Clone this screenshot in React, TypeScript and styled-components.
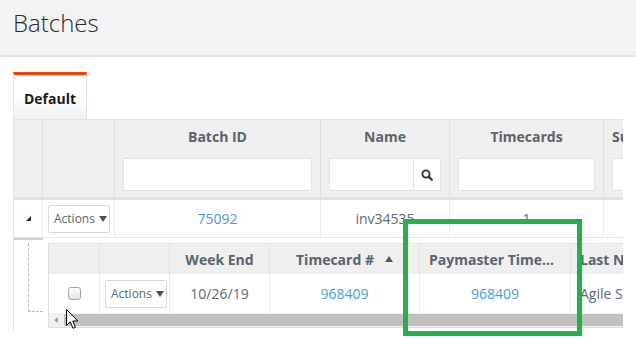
import React from "react";
import styled, { createGlobalStyle } from "styled-components";

const GlobalStyle = createGlobalStyle`
  html, body { margin: 0; padding: 0; background: #fff; }
  body { font-family: "Open Sans", "Noto Sans", sans-serif; }
  * { box-sizing: border-box; }
`;

const Page = styled.div`
  position: relative;
  width: 636px;
  height: 338px;
  overflow: hidden;
  background: #fff;
`;

const TopBar = styled.header`
  height: 57px;
  background: #f2f3f5;
  border-bottom: 2px solid #dfe3e4;
  padding: 8px 13px 0;
`;

const Title = styled.h1`
  margin: 0;
  font-size: 24px;
  font-weight: 300;
  line-height: 30px;
  color: #2b2b2b;
`;

const Content = styled.main`
  padding: 15px 0 0 13px;
`;

const Tabs = styled.div`
  display: flex;
`;

const Tab = styled.div`
  width: 74px;
  height: 47px;
  border-top: 3px solid #ff3d00;
  border-left: 1px solid #e2e2e2;
  border-right: 1px solid #e2e2e2;
  background: linear-gradient(#ffffff, #ffffff 45%, #f1f1f1);
  font-size: 14px;
  font-weight: 700;
  color: #1b1b1b;
  text-align: center;
  padding-top: 14px;
  line-height: 19px;
`;

const Grid = styled.div`
  width: 610px;
  overflow: hidden;
  border-left: 1px solid #e3e3e3;
  padding-bottom: 2px;
`;

const mainCols = "29px 72px 206px 129px 154px 200px";
const subCols = "51px 70px 100px 150px 151px 200px";

const HeaderRow = styled.div`
  display: grid;
  grid-template-columns: ${mainCols};
  height: 81px;
  background: #efefef;
  border-top: 1px solid #e3e3e3;
  border-bottom: 3px solid #e2e2e2;
`;

const HeaderCell = styled.div`
  display: flex;
  flex-direction: column;
  padding: 7px 8px 0;
  border-right: 1px solid #e0e0e0;
  overflow: hidden;
`;

const Label = styled.div<{ $align?: string }>`
  height: 19px;
  margin-bottom: 12px;
  font-size: 14px;
  line-height: 19px;
  font-weight: 700;
  color: #59646c;
  white-space: nowrap;
  overflow: hidden;
  text-align: ${(p) => p.$align || "center"};
`;

const FilterBox = styled.div`
  display: flex;
  height: 33px;
  background: #fff;
  border: 1px solid #e2e2e2;
`;

const FilterField = styled.div`
  flex: 1;
`;

const SearchAddon = styled.div`
  width: 27px;
  border-left: 1px solid #e2e2e2;
  display: flex;
  align-items: center;
  justify-content: center;
`;

const DataRow = styled.div`
  display: grid;
  grid-template-columns: ${mainCols};
  height: 38px;
  border-bottom: 1px solid #e6e6e6;
`;

const Cell = styled.div<{ $justify?: string }>`
  display: flex;
  align-items: center;
  justify-content: ${(p) => p.$justify || "center"};
  border-right: 1px solid #ebebeb;
  font-size: 14px;
  color: #606a72;
  white-space: nowrap;
  overflow: hidden;
`;

const ActionCell = styled(Cell)`
  justify-content: flex-start;
  padding-left: 5px;
`;

const Link = styled.span`
  color: #3c9fe6;
  font-size: 14px;
`;

const ActionsButton = styled.div`
  width: 62px;
  height: 28px;
  display: flex;
  align-items: center;
  padding-left: 5px;
  gap: 4px;
  background: #fff;
  border: 1px solid #d6dadd;
  border-radius: 2px;
  font-size: 12px;
  color: #5a6876;
`;

const Caret = styled.span`
  width: 0;
  height: 0;
  border-left: 4px solid transparent;
  border-right: 4px solid transparent;
  border-top: 6px solid #4a5560;
`;

const DetailRow = styled.div`
  display: flex;
`;

const TreeCell = styled.div`
  width: 29px;
  flex: none;
  border-top: 2px solid #c8d3d9;
`;

const TreeLine = styled.div`
  margin: 3px 0 0 14px;
  width: 15px;
  height: 69px;
  border-left: 1px dashed #bdbdbd;
  border-bottom: 1px dashed #bdbdbd;
`;

const DetailBody = styled.div`
  flex: 1;
  min-width: 0;
  overflow: hidden;
  padding: 5px 0 0 5px;
`;

const SubTable = styled.div`
  border-left: 1px solid #dedede;
  border-top: 1px solid #e3e3e3;
  border-bottom: 1px solid #dcdcdc;
`;

const SubHeaderRow = styled.div`
  display: grid;
  grid-template-columns: ${subCols};
  height: 30px;
  background: #efefef;
`;

const SubHeaderCell = styled.div<{ $justify?: string }>`
  display: flex;
  align-items: center;
  justify-content: ${(p) => p.$justify || "center"};
  gap: 11px;
  padding: 0 9px;
  border-right: 1px solid #e2e2e2;
  font-size: 14px;
  font-weight: 700;
  color: #59646c;
  white-space: nowrap;
  overflow: hidden;
`;

const SortUp = styled.span`
  width: 0;
  height: 0;
  border-left: 4px solid transparent;
  border-right: 4px solid transparent;
  border-bottom: 6px solid #4f5a62;
`;

const SubDataRow = styled.div`
  display: grid;
  grid-template-columns: ${subCols};
  height: 39px;
`;

const SubCell = styled(Cell)`
  padding: 0 9px;
`;

const SubActionCell = styled(ActionCell)``;

const Checkbox = styled.span`
  width: 13px;
  height: 13px;
  border: 1px solid #a7a7a7;
  border-radius: 3px;
  background: linear-gradient(#fdfdfd, #e2e2e2);
`;

const ScrollBar = styled.div`
  display: flex;
  height: 14px;
  background: #f1f1f1;
`;

const ScrollArrow = styled.div`
  width: 14px;
  flex: none;
  display: flex;
  align-items: center;
  justify-content: center;
`;

const ArrowLeft = styled.span`
  width: 0;
  height: 0;
  border-top: 3px solid transparent;
  border-bottom: 3px solid transparent;
  border-right: 4px solid #a3a3a3;
`;

const ScrollThumb = styled.div`
  flex: 1;
  margin: 1px 0 1px 1px;
  background: #c1c1c1;
`;

const Highlight = styled.div`
  position: absolute;
  left: 403px;
  top: 219px;
  width: 179px;
  height: 117px;
  border: 5px solid #22b14c;
  pointer-events: none;
`;

const Cursor = styled.svg`
  position: absolute;
  left: 66px;
  top: 309px;
`;

const SearchIcon = () => (
  <svg width="12" height="12" viewBox="0 0 12 12">
    <circle cx="5" cy="5" r="3.6" fill="none" stroke="#333" strokeWidth="1.8" />
    <line x1="7.6" y1="7.6" x2="10.8" y2="10.8" stroke="#333" strokeWidth="2.2" strokeLinecap="round" />
  </svg>
);

const ExpandedIcon = () => (
  <svg width="5" height="5" viewBox="0 0 5 5">
    <polygon points="5,0 5,5 0,5" fill="#1e2b4b" />
  </svg>
);

const Actions = () => (
  <ActionsButton>
    Actions <Caret />
  </ActionsButton>
);

export default function App() {
  return (
    <Page>
      <GlobalStyle />
      <TopBar>
        <Title>Batches</Title>
      </TopBar>
      <Content>
        <Tabs>
          <Tab>Default</Tab>
        </Tabs>
        <Grid>
          <HeaderRow>
            <HeaderCell />
            <HeaderCell />
            <HeaderCell>
              <Label>Batch ID</Label>
              <FilterBox />
            </HeaderCell>
            <HeaderCell>
              <Label>Name</Label>
              <FilterBox>
                <FilterField />
                <SearchAddon>
                  <SearchIcon />
                </SearchAddon>
              </FilterBox>
            </HeaderCell>
            <HeaderCell>
              <Label>Timecards</Label>
              <FilterBox />
            </HeaderCell>
            <HeaderCell>
              <Label $align="left">Submitted</Label>
              <FilterBox />
            </HeaderCell>
          </HeaderRow>
          <DataRow>
            <Cell>
              <ExpandedIcon />
            </Cell>
            <ActionCell>
              <Actions />
            </ActionCell>
            <Cell>
              <Link>75092</Link>
            </Cell>
            <Cell>inv34535</Cell>
            <Cell>1</Cell>
            <Cell />
          </DataRow>
          <DetailRow>
            <TreeCell>
              <TreeLine />
            </TreeCell>
            <DetailBody>
              <SubTable>
                <SubHeaderRow>
                  <SubHeaderCell />
                  <SubHeaderCell />
                  <SubHeaderCell>Week End</SubHeaderCell>
                  <SubHeaderCell>
                    Timecard # <SortUp />
                  </SubHeaderCell>
                  <SubHeaderCell $justify="flex-start">Paymaster Time…</SubHeaderCell>
                  <SubHeaderCell $justify="flex-start">Last Name</SubHeaderCell>
                </SubHeaderRow>
                <SubDataRow>
                  <Cell>
                    <Checkbox />
                  </Cell>
                  <SubActionCell>
                    <Actions />
                  </SubActionCell>
                  <Cell>10/26/19</Cell>
                  <Cell>
                    <Link>968409</Link>
                  </Cell>
                  <Cell>
                    <Link>968409</Link>
                  </Cell>
                  <SubCell $justify="flex-start">Agile Staffing</SubCell>
                </SubDataRow>
                <ScrollBar>
                  <ScrollArrow>
                    <ArrowLeft />
                  </ScrollArrow>
                  <ScrollThumb />
                </ScrollBar>
              </SubTable>
            </DetailBody>
          </DetailRow>
        </Grid>
      </Content>
      <Highlight />
      <Cursor width="13" height="21" viewBox="0 0 13 21">
        <path
          d="M0.5 0.5 L0.5 16.5 L4.3 12.8 L7 19.3 L9.4 18.3 L6.8 12 L11.8 12 Z"
          fill="#fff"
          stroke="#000"
          strokeWidth="1"
          strokeLinejoin="round"
        />
      </Cursor>
    </Page>
  );
}
